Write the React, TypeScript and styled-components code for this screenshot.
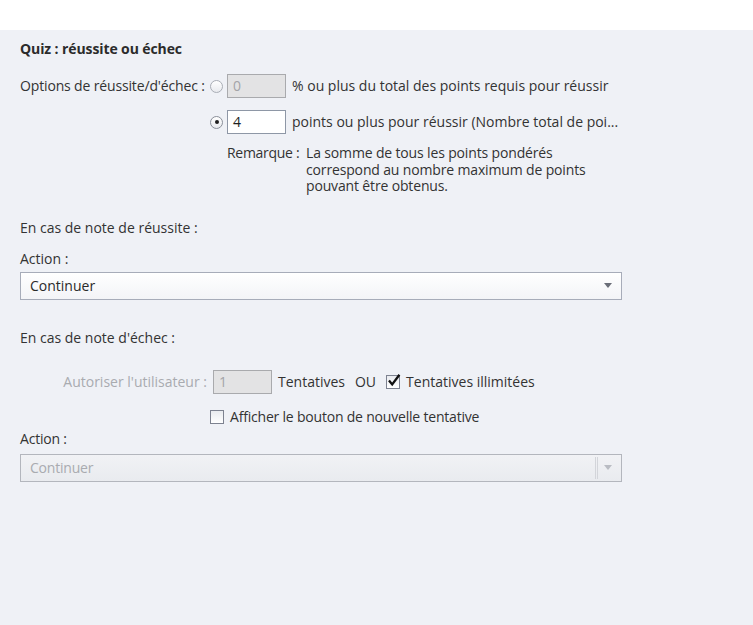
import React from "react";
import styled, { createGlobalStyle } from "styled-components";

const Global = createGlobalStyle`
  html, body { margin: 0; padding: 0; background: #ffffff; }
  body { font-family: "Open Sans", "Noto Sans", sans-serif; }
`;

const Page = styled.div`
  padding-top: 30px;
  background: #ffffff;
`;

const Panel = styled.div`
  background: #eff1f6;
  min-height: 595px;
  box-sizing: border-box;
  padding: 11px 0 0 20px;
  color: #333333;
  font-size: 14px;
  line-height: 16px;
`;

const Title = styled.div`
  font-weight: 700;
  color: #2b2b2b;
  height: 16px;
  letter-spacing: -0.1px;
`;

const Text = styled.div<{ $mt?: number; $muted?: boolean; $tight?: number }>`
  margin-top: ${(p) => p.$mt ?? 0}px;
  color: ${(p) => (p.$muted ? "#a9abb0" : "#333333")};
  letter-spacing: ${(p) => p.$tight ?? 0}px;
  white-space: nowrap;
`;

const OptionsGrid = styled.div`
  display: grid;
  grid-template-columns: 190px auto;
  row-gap: 12px;
  margin-top: 17px;
  align-items: center;
`;

const OptionRow = styled.div`
  display: flex;
  align-items: center;
  height: 24px;
`;

const Radio = styled.span<{ $checked?: boolean }>`
  width: 13px;
  height: 13px;
  box-sizing: border-box;
  border-radius: 50%;
  border: 1px solid ${(p) => (p.$checked ? "#8a8f99" : "#a9adb5")};
  background: linear-gradient(#ffffff, #e8eaee);
  display: flex;
  align-items: center;
  justify-content: center;
  margin-right: 4px;
  flex: none;
  &::after {
    content: "";
    display: ${(p) => (p.$checked ? "block" : "none")};
    width: 4px;
    height: 4px;
    border-radius: 50%;
    background: #1e1e1e;
  }
`;

const NumInput = styled.div<{ $disabled?: boolean }>`
  width: 59px;
  height: 24px;
  box-sizing: border-box;
  border: 1px solid ${(p) => (p.$disabled ? "#a9aaad" : "#8e97a6")};
  background: ${(p) => (p.$disabled ? "#e3e3e4" : "#ffffff")};
  color: ${(p) => (p.$disabled ? "#a3a4a8" : "#1f1f1f")};
  padding-left: 5px;
  line-height: 22px;
  flex: none;
`;

const After = styled.span`
  margin-left: 6px;
  white-space: nowrap;
`;

const Note = styled.div`
  display: grid;
  grid-template-columns: 79px auto;
  margin: 11px 0 0 207px;
`;

const NoteText = styled.div`
  letter-spacing: -0.15px;
  line-height: 16.5px;
`;

const Select = styled.div<{ $disabled?: boolean }>`
  margin-top: ${(p) => (p.$disabled ? 7 : 5)}px;
  width: 602px;
  height: 28px;
  box-sizing: border-box;
  border: 1px solid ${(p) => (p.$disabled ? "#b3b6bd" : "#a7acb9")};
  background: ${(p) =>
    p.$disabled
      ? "linear-gradient(#f1f2f5, #e9ebef)"
      : "linear-gradient(#ffffff, #f3f4f7)"};
  display: flex;
  align-items: center;
  padding-left: 9px;
  color: ${(p) => (p.$disabled ? "#a9abb0" : "#2a2a2a")};
  letter-spacing: ${(p) => (p.$disabled ? "-0.2px" : "0")};
`;

const SelectValue = styled.span`
  flex: 1;
`;

const Separator = styled.span`
  width: 3px;
  height: 22px;
  border-left: 1px solid #d3d5da;
  border-right: 1px solid #d3d5da;
  box-sizing: border-box;
  margin-right: 6px;
`;

const Arrow = styled.svg`
  width: 8px;
  height: 5px;
  margin-right: 9px;
  flex: none;
`;

const AttemptsRow = styled.div`
  display: flex;
  align-items: center;
  height: 24px;
  margin-top: 24px;
`;

const AttemptLabel = styled.span`
  width: 193px;
  text-align: right;
  padding-right: 6px;
  box-sizing: border-box;
  color: #a9abb0;
  white-space: nowrap;
`;

const Gap = styled.span<{ $w: number }>`
  width: ${(p) => p.$w}px;
  flex: none;
`;

const CheckRow = styled.div<{ $mt?: number; $indent?: number }>`
  display: flex;
  align-items: center;
  margin-top: ${(p) => p.$mt ?? 0}px;
  margin-left: ${(p) => p.$indent ?? 0}px;
  height: 16px;
`;

const Box = styled.span`
  width: 14px;
  height: 14px;
  box-sizing: border-box;
  border: 1px solid #7d8290;
  background: linear-gradient(#e9ebef, #ffffff);
  position: relative;
  flex: none;
  margin-right: 6px;
`;

const Tick = styled.svg`
  position: absolute;
  left: 0px;
  top: -3px;
  width: 14px;
  height: 14px;
`;

function Check({ checked }: { checked?: boolean }) {
  return (
    <Box>
      {checked && (
        <Tick viewBox="0 0 14 14">
          <path d="M2 7.5 L5.2 11.4 L12.4 1.8" fill="none" stroke="#111" strokeWidth="2.3" strokeLinejoin="miter" />
        </Tick>
      )}
    </Box>
  );
}

function DropArrow({ muted }: { muted?: boolean }) {
  return (
    <Arrow viewBox="0 0 8 5">
      <path d="M0 0 H8 L4 5 Z" fill={muted ? "#b9bcc3" : "#6a6e78"} />
    </Arrow>
  );
}

export default function App() {
  return (
    <>
      <Global />
      <Page>
        <Panel>
          <Title>Quiz : réussite ou échec</Title>
          <OptionsGrid>
            <Text $tight={-0.15}>Options de réussite/d'échec :</Text>
            <OptionRow>
              <Radio />
              <NumInput $disabled>0</NumInput>
              <After>% ou plus du total des points requis pour réussir</After>
            </OptionRow>
            <span />
            <OptionRow>
              <Radio $checked />
              <NumInput>4</NumInput>
              <After>points ou plus pour réussir (Nombre total de poi...</After>
            </OptionRow>
          </OptionsGrid>
          <Note>
            <Text $tight={-0.3}>Remarque :</Text>
            <NoteText>
              La somme de tous les points pondérés
              <br />
              correspond au nombre maximum de points
              <br />
              pouvant être obtenus.
            </NoteText>
          </Note>
          <Text $mt={25}>En cas de note de réussite :</Text>
          <Text $mt={15}>Action :</Text>
          <Select>
            <SelectValue>Continuer</SelectValue>
            <DropArrow />
          </Select>
          <Text $mt={30}>En cas de note d'échec :</Text>
          <AttemptsRow>
            <AttemptLabel>Autoriser l'utilisateur :</AttemptLabel>
            <NumInput $disabled>1</NumInput>
            <After>Tentatives</After>
            <Gap $w={10} />
            <span>OU</span>
            <Gap $w={10} />
            <Check checked />
            <span>Tentatives illimitées</span>
          </AttemptsRow>
          <CheckRow $mt={15} $indent={190}>
            <Check />
            <Text $tight={-0.2}>Afficher le bouton de nouvelle tentative</Text>
          </CheckRow>
          <Text $mt={6} $tight={-0.2}>Action :</Text>
          <Select $disabled>
            <SelectValue>Continuer</SelectValue>
            <Separator />
            <DropArrow muted />
          </Select>
        </Panel>
      </Page>
    </>
  );
}
